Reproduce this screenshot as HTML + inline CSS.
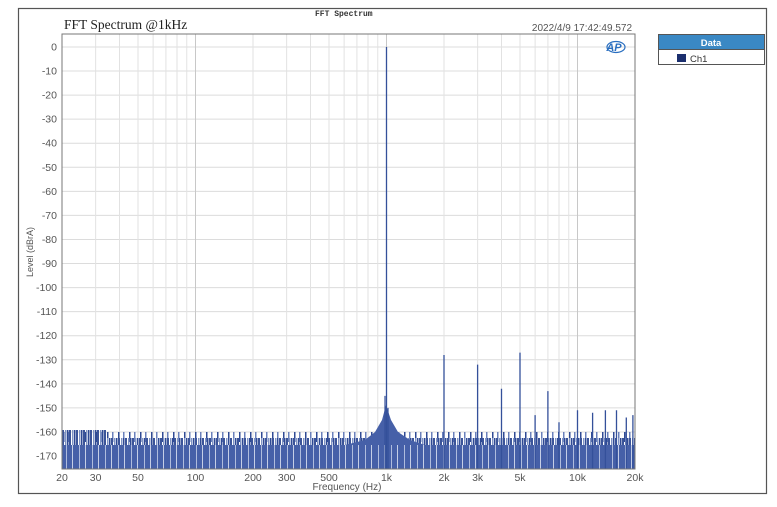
<!DOCTYPE html>
<html><head><meta charset="utf-8"><style>
html,body{margin:0;padding:0;background:#fff;width:777px;height:507px;overflow:hidden;font-family:"Liberation Sans",sans-serif}
</style></head><body>
<svg id="s" width="777" height="507" xmlns="http://www.w3.org/2000/svg" style="position:absolute;left:0;top:0">
<defs>
<pattern id="st" x="62" y="0" width="7" height="60" patternUnits="userSpaceOnUse">
<rect x="0" y="0" width="2" height="60" fill="#3b5499"/>
<rect x="3" y="6" width="1.5" height="60" fill="#7f93c4"/>
<rect x="5" y="3" width="1.5" height="60" fill="#2f4a94"/>
</pattern>
<pattern id="st2" x="62" y="0" width="11" height="60" patternUnits="userSpaceOnUse">
<rect x="1" y="0" width="1.5" height="60" fill="#2f4a94"/>
<rect x="6" y="4" width="1.5" height="60" fill="#6a80bb"/>
</pattern>
<pattern id="gap" x="62" y="0" width="13" height="60" patternUnits="userSpaceOnUse">
<rect x="4" y="0" width="0.8" height="60" fill="#c9d2ea"/>
<rect x="10" y="0" width="0.8" height="60" fill="#e4e9f5"/>
</pattern>
</defs>
<rect x="18.5" y="8.5" width="748" height="485" fill="#fff" stroke="#555" stroke-width="1.2"/>
<text x="315" y="16" font-family="Liberation Mono,monospace" font-size="8" font-weight="bold" fill="#333">FFT Spectrum</text>
<text x="64" y="29" font-family="Liberation Serif,serif" font-size="13.5" fill="#222">FFT Spectrum @1kHz</text>
<text x="632" y="31" text-anchor="end" font-size="10" fill="#555">2022/4/9 17:42:49.572</text>
<g id="grid"></g>
<rect x="62" y="432" width="573" height="10" fill="url(#st2)"/>
<rect x="62" y="438" width="573" height="12" fill="url(#st)"/>
<rect x="62" y="445" width="573" height="24" fill="#4660a8"/>
<rect x="62" y="430" width="45" height="15" fill="url(#st)"/>
<polygon points="345,445 365,440 375,432 382,420 386,405 391,420 398,432 410,440 425,445" fill="#4660a8"/>
<rect x="62" y="445" width="573" height="24" fill="url(#gap)"/>
<g id="data"></g>
<rect x="62" y="34" width="573" height="435" fill="none" stroke="#777" stroke-width="1"/>
<text x="614" y="51" text-anchor="middle" font-size="11" font-style="italic" font-weight="bold" fill="#2a6fc0">AP</text>
<ellipse cx="616" cy="47" rx="9" ry="5.5" fill="none" stroke="#2a6fc0" stroke-width="1.2"/>
<g id="lab" font-size="10.5" fill="#555"></g>
<text x="347" y="490" text-anchor="middle" font-size="10" fill="#555">Frequency (Hz)</text>
<text transform="translate(33,252) rotate(-90)" text-anchor="middle" font-size="9" fill="#555">Level (dBrA)</text>
<rect x="658.5" y="34.5" width="106" height="30" fill="#fff" stroke="#555"/>
<rect x="658.5" y="34.5" width="106" height="15" fill="#3a88c4" stroke="#555"/>
<text x="711" y="46" text-anchor="middle" font-size="9.5" font-weight="bold" fill="#fff">Data</text>
<rect x="677" y="54" width="9" height="8" fill="#1b2f6e"/>
<text x="690" y="62" font-size="9.5" fill="#333">Ch1</text>
</svg>
<script>
var NS="http://www.w3.org/2000/svg";
function el(p,t,a,txt){var e=document.createElementNS(NS,t);for(var k in a)e.setAttribute(k,a[k]);if(txt!=null)e.textContent=txt;p.appendChild(e);return e;}
function X(f){return 62+191*Math.log10(f/20);}
function Y(d){return 47-d*2.406;}
var g=document.getElementById('grid'),lab=document.getElementById('lab'),dt=document.getElementById('data');
for(var d=0;d>=-170;d-=10){el(g,'line',{x1:62,x2:635,y1:Y(d),y2:Y(d),stroke:'#dcdcdc','stroke-width':1});
el(lab,'text',{x:57,y:Y(d)+3.5,'text-anchor':'end'},String(d));}
var dec=[10,100,1000,10000];
dec.forEach(function(b){for(var m=1;m<10;m++){var f=b*m;if(f<20||f>20000)continue;
el(g,'line',{x1:X(f),x2:X(f),y1:34,y2:469,stroke:(m==1?'#c8c8c8':'#e2e2e2'),'stroke-width':1});}});
var xl=[[20,'20'],[30,'30'],[50,'50'],[100,'100'],[200,'200'],[300,'300'],[500,'500'],[1000,'1k'],[2000,'2k'],[3000,'3k'],[5000,'5k'],[10000,'10k'],[20000,'20k']];
xl.forEach(function(a){el(lab,'text',{x:X(a[0]),y:481,'text-anchor':'middle'},a[1]);});
var h=[[1000,0],[2000,-128],[3000,-132],[4000,-142],[5000,-127],[6000,-153],[7000,-143],[8000,-156],[10000,-151],[12000,-152],[14000,-151],[16000,-151],[18000,-154],[19500,-153]];
var ph='';h.forEach(function(a){ph+='M'+X(a[0]).toFixed(1)+' 469V'+Y(a[1]).toFixed(1);});
el(dt,'path',{d:ph,stroke:'#34509a','stroke-width':1.3,fill:'none'});
el(dt,'path',{d:'M'+(X(1000)-1.5)+' 469V'+Y(-145)+'M'+(X(1000)+1.5)+' 469V'+Y(-150),stroke:'#34509a','stroke-width':1.2,fill:'none'});
</script>
</body></html>
